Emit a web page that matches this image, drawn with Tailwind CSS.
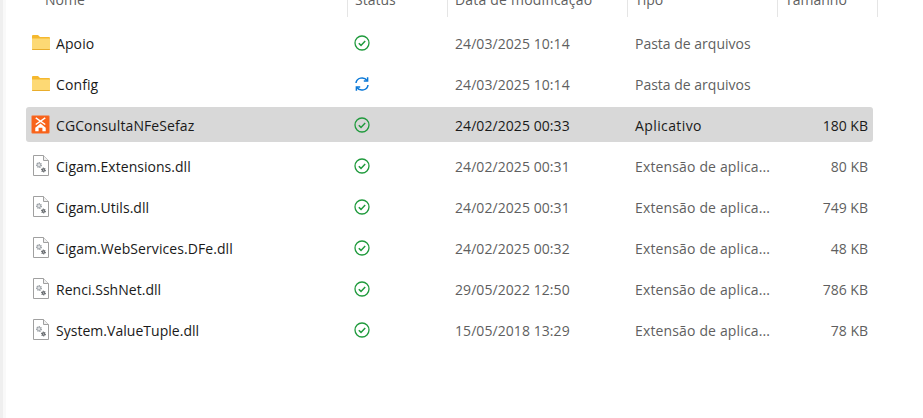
<!doctype html>
<html><head><meta charset="utf-8"><script src="https://cdn.jsdelivr.net/npm/@tailwindcss/browser@4"></script></head>
<body class="bg-white overflow-hidden">
<svg class="hidden"><defs>
<symbol id="ok" viewBox="0 0 16 16"><circle cx="8" cy="8" r="7" fill="none" stroke="#1f9a3c" stroke-width="1.3"/><path d="M4.8 8.3l2.2 2.1 4.2-4.4" fill="none" stroke="#1f9a3c" stroke-width="1.5"/></symbol>
<symbol id="sync" viewBox="0 0 16 16"><path d="M2 7A6 5.6 0 0 1 13 4.5M14 9A6 5.6 0 0 1 3 11.5" fill="none" stroke="#0a78d7" stroke-width="1.5"/><path d="M13.6 1.2v3.8H9.8M2.4 14.8V11h3.8" fill="none" stroke="#0a78d7" stroke-width="1.5"/></symbol>
<symbol id="folder" viewBox="0 0 18 15"><path d="M0 1a1 1 0 0 1 1-1h5l2 2h9a1 1 0 0 1 1 1v2H0z" fill="#f5b82e"/><path d="M0 3.5h18V14a1 1 0 0 1-1 1H1a1 1 0 0 1-1-1z" fill="#fdd974"/><path d="M0 14h18v.2a.8.8 0 0 1-.8.8H.8a.8.8 0 0 1-.8-.8z" fill="#e9ad2c"/></symbol>
<symbol id="dll" viewBox="0 0 16 21"><path d="M.5.5h10l5 5v15H.5z" fill="#fff" stroke="#a0a0a0"/><path d="M10.5.5v5h5" fill="#f0f0f0" stroke="#a0a0a0"/><circle cx="6" cy="10" r="2.2" fill="#c4c8cc" stroke="#9a9fa4" stroke-width="1.6" stroke-dasharray="1.1 .7"/><circle cx="6" cy="10" r=".8" fill="#fff"/><circle cx="10.5" cy="15" r="1.7" fill="#75797d" stroke="#5c6064" stroke-width="1.4" stroke-dasharray="1 .6"/><circle cx="10.5" cy="15" r=".6" fill="#ddd"/></symbol>
</defs></svg>
<div class="w-[923px] h-[418px] flex overflow-hidden text-[14px] text-[#1a1a1a] [font-family:'Open_Sans','Noto_Sans',sans-serif]">
  <div class="w-[3px] bg-[#efefef] shrink-0"></div>
  <div class="w-[3px] bg-[#f9f9f9] shrink-0"></div>
  <div class="flex-1 pl-[20px]">
    <div class="h-[17px] flex items-end mb-[8px] text-[#5f5f5f] text-[14px]">
      <div class="w-[322px] h-[17px] pl-[19px] border-r border-[#e5e5e5]"><span class="block -mt-[10px] leading-[20px]">Nome</span></div>
      <div class="w-[100px] h-[17px] pl-[7px] border-r border-[#e5e5e5]"><span class="block -mt-[10px] leading-[20px]">Status</span></div>
      <div class="w-[180px] h-[17px] pl-[7px] border-r border-[#e5e5e5]"><span class="block -mt-[10px] leading-[20px] tracking-[0.2px]">Data de modificação</span></div>
      <div class="w-[150px] h-[17px] pl-[7px] border-r border-[#e5e5e5]"><span class="block -mt-[10px] leading-[20px]">Tipo</span></div>
      <div class="w-[100px] h-[17px] pl-[7px] border-r border-[#e5e5e5]"><span class="block -mt-[10px] leading-[20px]">Tamanho</span></div>
    </div>
    <div class="w-[847px] flex flex-col gap-[6px]">
      <div class="h-[35px] flex items-center rounded-[3px]">
        <div class="w-[321px] flex items-center"><svg class="w-[18px] h-[15px] ml-[6px] mr-[6px]"><use href="#folder"/></svg><span class="mt-[2px] tracking-[0.1px]">Apoio</span></div>
        <div class="w-[100px] pl-[7px]"><svg class="w-[16px] h-[16px] block"><use href="#ok"/></svg></div>
        <div class="w-[180px] pl-[8px] mt-[2px] tracking-[0.07px] text-[#5f5f5f]">24/03/2025 10:14</div>
        <div class="w-[150px] pl-[8px] mt-[2px] text-[#5f5f5f]">Pasta de arquivos</div>
        <div class="w-[96px] pr-[5px] text-right text-[#5f5f5f]"></div>
      </div>
      <div class="h-[35px] flex items-center rounded-[3px]">
        <div class="w-[321px] flex items-center"><svg class="w-[18px] h-[15px] ml-[6px] mr-[6px]"><use href="#folder"/></svg><span class="mt-[2px] tracking-[0.1px]">Config</span></div>
        <div class="w-[100px] pl-[7px]"><svg class="w-[16px] h-[16px] block"><use href="#sync"/></svg></div>
        <div class="w-[180px] pl-[8px] mt-[2px] tracking-[0.07px] text-[#5f5f5f]">24/03/2025 10:14</div>
        <div class="w-[150px] pl-[8px] mt-[2px] text-[#5f5f5f]">Pasta de arquivos</div>
        <div class="w-[96px] pr-[5px] text-right text-[#5f5f5f]"></div>
      </div>
      <div class="h-[35px] flex items-center rounded-[3px] bg-[#d8d8d8]">
        <div class="w-[321px] flex items-center">
          <svg class="w-[19px] h-[19px] ml-[5px] mr-[6px]" viewBox="0 0 20 20"><rect x=".5" y=".5" width="19" height="19" rx="1.5" fill="#f8631a" stroke="#e8a080"/><path d="M5 3l10 7M15 3L5 10" stroke="#fff" stroke-width="1.5" fill="none"/><path d="M10 9l-5.5 4.5V17h3.5v-3.5h4V17h3.5v-3.5z" fill="#fff"/></svg>
          <span class="mt-[2px] tracking-[0.1px]">CGConsultaNFeSefaz</span></div>
        <div class="w-[100px] pl-[7px]"><svg class="w-[16px] h-[16px] block"><use href="#ok"/></svg></div>
        <div class="w-[180px] pl-[8px] mt-[2px] tracking-[0.07px]">24/02/2025 00:33</div>
        <div class="w-[150px] pl-[8px] mt-[2px] tracking-[0.4px]">Aplicativo</div>
        <div class="w-[96px] pr-[5px] mt-[2px] text-right">180 KB</div>
      </div>
      <div class="h-[35px] flex items-center rounded-[3px]">
        <div class="w-[321px] flex items-center"><svg class="w-[16px] h-[21px] ml-[7px] mr-[7px]"><use href="#dll"/></svg><span class="mt-[2px] tracking-[0.03px]">Cigam.Extensions.dll</span></div>
        <div class="w-[100px] pl-[7px]"><svg class="w-[16px] h-[16px] block"><use href="#ok"/></svg></div>
        <div class="w-[180px] pl-[8px] mt-[2px] tracking-[0.07px] text-[#5f5f5f]">24/02/2025 00:31</div>
        <div class="w-[150px] pl-[8px] mt-[2px] tracking-[0.15px] text-[#5f5f5f]">Extensão de aplica...</div>
        <div class="w-[96px] pr-[5px] mt-[2px] text-right text-[#5f5f5f]">80 KB</div>
      </div>
      <div class="h-[35px] flex items-center rounded-[3px]">
        <div class="w-[321px] flex items-center"><svg class="w-[16px] h-[21px] ml-[7px] mr-[7px]"><use href="#dll"/></svg><span class="mt-[2px] tracking-[0.03px]">Cigam.Utils.dll</span></div>
        <div class="w-[100px] pl-[7px]"><svg class="w-[16px] h-[16px] block"><use href="#ok"/></svg></div>
        <div class="w-[180px] pl-[8px] mt-[2px] tracking-[0.07px] text-[#5f5f5f]">24/02/2025 00:31</div>
        <div class="w-[150px] pl-[8px] mt-[2px] tracking-[0.15px] text-[#5f5f5f]">Extensão de aplica...</div>
        <div class="w-[96px] pr-[5px] mt-[2px] text-right text-[#5f5f5f]">749 KB</div>
      </div>
      <div class="h-[35px] flex items-center rounded-[3px]">
        <div class="w-[321px] flex items-center"><svg class="w-[16px] h-[21px] ml-[7px] mr-[7px]"><use href="#dll"/></svg><span class="mt-[2px] tracking-[0.07px]">Cigam.WebServices.DFe.dll</span></div>
        <div class="w-[100px] pl-[7px]"><svg class="w-[16px] h-[16px] block"><use href="#ok"/></svg></div>
        <div class="w-[180px] pl-[8px] mt-[2px] tracking-[0.07px] text-[#5f5f5f]">24/02/2025 00:32</div>
        <div class="w-[150px] pl-[8px] mt-[2px] tracking-[0.15px] text-[#5f5f5f]">Extensão de aplica...</div>
        <div class="w-[96px] pr-[5px] mt-[2px] text-right text-[#5f5f5f]">48 KB</div>
      </div>
      <div class="h-[35px] flex items-center rounded-[3px]">
        <div class="w-[321px] flex items-center"><svg class="w-[16px] h-[21px] ml-[7px] mr-[7px]"><use href="#dll"/></svg><span class="mt-[2px] tracking-[0.03px]">Renci.SshNet.dll</span></div>
        <div class="w-[100px] pl-[7px]"><svg class="w-[16px] h-[16px] block"><use href="#ok"/></svg></div>
        <div class="w-[180px] pl-[8px] mt-[2px] tracking-[0.07px] text-[#5f5f5f]">29/05/2022 12:50</div>
        <div class="w-[150px] pl-[8px] mt-[2px] tracking-[0.15px] text-[#5f5f5f]">Extensão de aplica...</div>
        <div class="w-[96px] pr-[5px] mt-[2px] text-right text-[#5f5f5f]">786 KB</div>
      </div>
      <div class="h-[35px] flex items-center rounded-[3px]">
        <div class="w-[321px] flex items-center"><svg class="w-[16px] h-[21px] ml-[7px] mr-[7px]"><use href="#dll"/></svg><span class="mt-[2px] tracking-[0.03px]">System.ValueTuple.dll</span></div>
        <div class="w-[100px] pl-[7px]"><svg class="w-[16px] h-[16px] block"><use href="#ok"/></svg></div>
        <div class="w-[180px] pl-[8px] mt-[2px] tracking-[0.07px] text-[#5f5f5f]">15/05/2018 13:29</div>
        <div class="w-[150px] pl-[8px] mt-[2px] tracking-[0.15px] text-[#5f5f5f]">Extensão de aplica...</div>
        <div class="w-[96px] pr-[5px] mt-[2px] text-right text-[#5f5f5f]">78 KB</div>
      </div>
    </div>
  </div>
</div>
</body></html>
